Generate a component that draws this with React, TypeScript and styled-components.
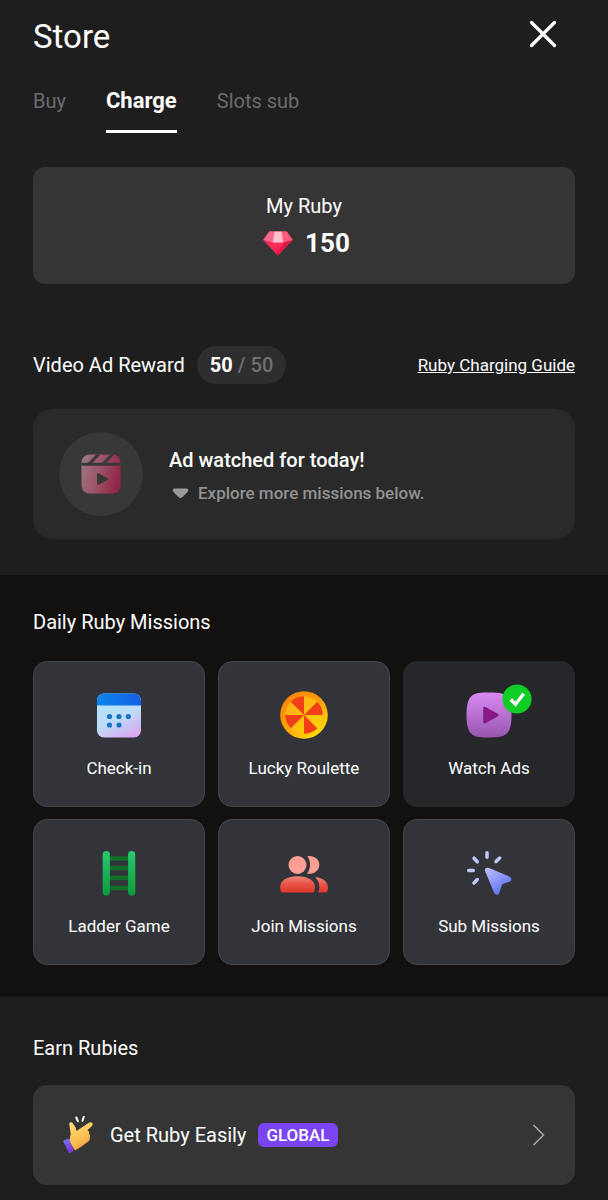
import React, { useState } from "react";
import styled, { createGlobalStyle } from "styled-components";

const GlobalStyle = createGlobalStyle`
  *, *::before, *::after { box-sizing: border-box; }
  body {
    margin: 0;
    background: #1e1e1e;
    color: #fff;
    font-family: Roboto, "Liberation Sans", sans-serif;
  }
  h1, h2, p { margin: 0; font-weight: 400; }
  button { font: inherit; color: inherit; background: none; border: 0; padding: 0; cursor: pointer; }
  svg { display: block; flex: none; }
`;

const Page = styled.main`
  min-height: 100vh;
  background: #1e1e1e;
`;

const Header = styled.header`
  display: flex;
  align-items: flex-start;
  justify-content: space-between;
  padding: 17px 48px 0 33px;
`;

const PageTitle = styled.h1`
  font-size: 33px;
  line-height: 40px;
`;

const CloseButton = styled.button`
  display: grid;
  place-items: center;
  width: 34px;
  height: 34px;
`;

const Tabs = styled.nav`
  display: flex;
  align-items: flex-start;
  gap: 40px;
  padding: 30px 33px 34px;
`;

const Tab = styled.button<{ $active: boolean }>`
  padding-bottom: 15px;
  border-bottom: 3px solid ${({ $active }) => ($active ? "#fff" : "transparent")};
  color: ${({ $active }) => ($active ? "#fff" : "#6b6b6e")};
  font-size: ${({ $active }) => ($active ? 22 : 20)}px;
  font-weight: ${({ $active }) => ($active ? 700 : 400)};
  line-height: 28px;
`;

const Section = styled.section<{ $dark?: boolean }>`
  background: ${({ $dark }) => ($dark ? "#12110f" : "transparent")};
  padding: ${({ $dark }) => ($dark ? "33px 33px 32px" : "0 33px 36px")};
`;

const EarnSection = styled(Section)`
  padding: 37px 33px 15px;
`;

const SectionTitle = styled.h2`
  font-size: 20px;
  line-height: 28px;
`;

const BalanceCard = styled.div`
  display: flex;
  flex-direction: column;
  align-items: center;
  gap: 8px;
  padding: 26px 24px 25px;
  border-radius: 12px;
  background: #353535;
`;

const BalanceLabel = styled.p`
  font-size: 20px;
  line-height: 26px;
`;

const BalanceValue = styled.div`
  display: flex;
  align-items: center;
  gap: 12px;
  padding-left: 5px;
  font-size: 26px;
  font-weight: 700;
  line-height: 32px;
`;

const RewardHeader = styled.div`
  display: flex;
  align-items: center;
  gap: 12px;
  padding: 62px 0 25px;
`;

const CountPill = styled.span`
  padding: 5px 13px;
  border-radius: 19px;
  background: #2e2e2e;
  color: #707070;
  font-size: 20px;
  font-weight: 500;
  line-height: 28px;
  strong { color: #fff; font-weight: 700; }
`;

const GuideLink = styled.a`
  margin-left: auto;
  color: #fff;
  font-size: 17px;
  line-height: 24px;
  text-decoration: underline;
`;

const RewardCard = styled.div`
  display: flex;
  align-items: center;
  gap: 26px;
  padding: 23px 26px;
  border-radius: 20px;
  background: #2a2a2a;
`;

const IconDisc = styled.div`
  display: grid;
  place-items: center;
  flex: none;
  width: 84px;
  height: 84px;
  border-radius: 50%;
  background: #383838;
`;

const RewardText = styled.div`
  display: flex;
  flex-direction: column;
  gap: 7px;
  padding-top: 3px;
`;

const RewardTitle = styled.p`
  font-size: 20px;
  font-weight: 500;
  line-height: 28px;
`;

const RewardHint = styled.p`
  display: flex;
  align-items: center;
  gap: 9px;
  padding-left: 3px;
  color: #929292;
  font-size: 17px;
  font-weight: 500;
  line-height: 24px;
`;

const MissionGrid = styled.div`
  display: grid;
  grid-template-columns: repeat(3, 1fr);
  gap: 12px 13px;
  margin-top: 25px;
`;

const MissionTile = styled.button<{ $done?: boolean }>`
  display: flex;
  flex-direction: column;
  align-items: center;
  gap: 17px;
  padding: 29px 8px 26px;
  border: 1px solid ${({ $done }) => ($done ? "#26272b" : "#45454c")};
  border-radius: 14px;
  background: ${({ $done }) => ($done ? "#26272b" : "#33343a")};
  font-size: 17px;
  line-height: 24px;
`;

const MissionIcon = styled.span`
  position: relative;
  display: block;
  width: 48px;
  height: 48px;
`;

const DoneBadge = styled.span`
  position: absolute;
  top: -7px;
  right: -19px;
`;

const OfferCard = styled.button`
  display: flex;
  align-items: center;
  width: 100%;
  margin-top: 23px;
  padding: 31px 30px;
  border-radius: 14px;
  background: #353535;
`;

const OfferTitle = styled.span`
  margin: 0 12px 0 16px;
  font-size: 20px;
  line-height: 28px;
`;

const OfferBadge = styled.span`
  margin-right: auto;
  padding: 0 8px;
  border-radius: 6px;
  background: #7a45f0;
  font-size: 17px;
  font-weight: 500;
  line-height: 24px;
`;

const CloseIcon = () => (
  <svg width="28" height="28" viewBox="0 0 28 28" fill="none" stroke="#fff" strokeWidth="3.2" strokeLinecap="round" aria-hidden>
    <path d="M2.5 2.5 25.5 25.5M25.5 2.5 2.5 25.5" />
  </svg>
);

const RubyIcon = () => (
  <svg width="30" height="25" viewBox="0 0 30 25" aria-hidden>
    <defs>
      <linearGradient id="rubyBody" x1="0" y1="0" x2="0.3" y2="1">
        <stop offset="0" stopColor="#ff5d7f" />
        <stop offset="1" stopColor="#f21345" />
      </linearGradient>
    </defs>
    <path d="M6.3.5h17.4L29.7 9 15 24.6.3 9Z" fill="url(#rubyBody)" />
    <path d="M6.3.5h5.2L9.6 11.5.3 9Z" fill="#fb6a88" />
    <path d="M18.5.5h5.2l6 8.5-9.3 2.5Z" fill="#ff5c7d" />
    <path d="M11.5.5h7l1.9 11H9.6Z" fill="#ffc2cb" />
    <path d="M.3 9 9.6 11.5 15 24.6Z" fill="#fa2b58" />
    <path d="M29.7 9 20.4 11.5 15 24.6Z" fill="#df1945" />
  </svg>
);

const ClapperIcon = () => (
  <svg width="40" height="40" viewBox="0 0 40 40" aria-hidden>
    <defs>
      <linearGradient id="clapper" x1="0" y1="0" x2="1" y2="0.25">
        <stop offset="0" stopColor="#9b7c82" />
        <stop offset="0.5" stopColor="#9c566a" />
        <stop offset="1" stopColor="#922847" />
      </linearGradient>
      <clipPath id="clapperClip">
        <rect x="0.5" y="0.5" width="39" height="39" rx="8" />
      </clipPath>
    </defs>
    <g clipPath="url(#clapperClip)">
      <rect width="40" height="40" fill="url(#clapper)" />
      <path d="M0 10.3h40" stroke="#383838" strokeWidth="3" />
      <path d="M8 10 18 0M22 10 32 0" stroke="#383838" strokeWidth="3" />
    </g>
    <path d="M17 20.2v9.6l9-4.8Z" fill="#383838" stroke="#383838" strokeWidth="2" strokeLinejoin="round" />
  </svg>
);

const DownIcon = () => (
  <svg width="17" height="11" viewBox="0 0 17 11" aria-hidden>
    <path d="M3 .5h11C16.2 .5 17 2.5 15.5 3.9L10.3 9.2C9.2 10.3 7.8 10.3 6.7 9.2L1.5 3.9C0 2.5 .8 .5 3 .5Z" fill="#9b9b9b" />
  </svg>
);

const CalendarIcon = () => (
  <svg width="48" height="48" viewBox="0 0 48 48" aria-hidden>
    <defs>
      <linearGradient id="calBody" x1="0.3" y1="0.2" x2="0.7" y2="1">
        <stop offset="0" stopColor="#b3e3fb" />
        <stop offset="0.5" stopColor="#bfdaf8" />
        <stop offset="1" stopColor="#d8aaf0" />
      </linearGradient>
      <linearGradient id="calTop" x1="0" y1="0" x2="1" y2="0">
        <stop offset="0" stopColor="#0a86ed" />
        <stop offset="1" stopColor="#165ee5" />
      </linearGradient>
    </defs>
    <rect x="2" y="2.5" width="44" height="44" rx="7" fill="url(#calBody)" />
    <path d="M2 14.5V9.5a7 7 0 0 1 7-7h30a7 7 0 0 1 7 7v5Z" fill="url(#calTop)" />
    <g fill="#1574c4">
      <circle cx="14.5" cy="25.5" r="2.6" />
      <circle cx="24" cy="25.5" r="2.6" />
      <circle cx="33.3" cy="25.5" r="2.6" />
      <circle cx="14.5" cy="34" r="2.6" />
      <circle cx="24" cy="34" r="2.6" />
    </g>
  </svg>
);

const RouletteIcon = () => (
  <svg width="48" height="48" viewBox="0 0 48 48" aria-hidden>
    <defs>
      <linearGradient id="wheelRim" x1="0.15" y1="0.1" x2="0.75" y2="0.9">
        <stop offset="0" stopColor="#ff8608" />
        <stop offset="0.5" stopColor="#ff9f08" />
        <stop offset="1" stopColor="#ffd60a" />
      </linearGradient>
      <linearGradient id="wheelFace" x1="0" y1="0" x2="1" y2="1">
        <stop offset="0" stopColor="#ffab15" />
        <stop offset="1" stopColor="#ffd40b" />
      </linearGradient>
    </defs>
    <circle cx="24" cy="24" r="23.8" fill="url(#wheelRim)" />
    <circle cx="24" cy="24" r="18.7" fill="url(#wheelFace)" />
    <g fill="#f03e16">
      <path d="M24 24V5.3A18.7 18.7 0 0 0 10.8 10.8Z" />
      <path d="M24 24H42.7A18.7 18.7 0 0 0 37.2 10.8Z" />
      <path d="M24 24V42.7A18.7 18.7 0 0 0 37.2 37.2Z" />
      <path d="M24 24H5.3A18.7 18.7 0 0 0 10.8 37.2Z" />
    </g>
  </svg>
);

const WatchIcon = () => (
  <svg width="48" height="48" viewBox="0 0 48 48" aria-hidden>
    <defs>
      <linearGradient id="watchBody" x1="0" y1="0" x2="0" y2="1">
        <stop offset="0" stopColor="#da89f4" />
        <stop offset="1" stopColor="#9657ad" />
      </linearGradient>
    </defs>
    <path d="M24 1.5C39 1.5 46.5 2 46.5 24S39 46.5 24 46.5 1.5 46 1.5 24 9 1.5 24 1.5Z" fill="url(#watchBody)" />
    <path d="M19.7 17.2v13.8l12.3-6.9Z" fill="#871b85" stroke="#871b85" strokeWidth="3" strokeLinejoin="round" />
  </svg>
);

const CheckIcon = () => (
  <svg width="30" height="30" viewBox="0 0 30 30" aria-hidden>
    <circle cx="15" cy="15" r="14.6" fill="#10ce25" />
    <path d="m8.8 15.5 4.7 4.7 8.2-10.4" fill="none" stroke="#fff" strokeWidth="3.4" />
  </svg>
);

const LadderIcon = () => (
  <svg width="48" height="48" viewBox="0 0 48 48" aria-hidden>
    <defs>
      <linearGradient id="ladderRail" x1="0" y1="0" x2="0" y2="1">
        <stop offset="0" stopColor="#2bca6f" />
        <stop offset="1" stopColor="#0b9b3e" />
      </linearGradient>
    </defs>
    <path d="M11 9.5h26M11 19h26M11 29h26M11 39h26" stroke="#12702a" strokeWidth="4.6" />
    <rect x="7.7" y="2" width="7.2" height="44.5" rx="3.6" fill="url(#ladderRail)" />
    <rect x="33.1" y="2" width="7.2" height="44.5" rx="3.6" fill="url(#ladderRail)" />
  </svg>
);

const PeopleIcon = () => (
  <svg width="48" height="48" viewBox="0 0 48 48" aria-hidden>
    <defs>
      <linearGradient id="peopleBody" x1="0" y1="0" x2="0" y2="1">
        <stop offset="0" stopColor="#f0857b" />
        <stop offset="0.5" stopColor="#e75245" />
        <stop offset="1" stopColor="#df3829" />
      </linearGradient>
    </defs>
    <circle cx="17.5" cy="16" r="9" fill="#ff9e95" />
    <path d="M27.5 7.2C34 6.3 39.3 10.3 39.3 16S33.5 25.7 27 24.7C30.8 19.8 31.2 12.8 27.5 7.2Z" fill="#ff9e95" />
    <path d="M17.5 27.2C28 27.2 35 31.3 35 38 35 41.9 34.2 43.5 31.5 43.5h-28C.8 43.5 .2 41.9 .2 38 .2 31.3 7 27.2 17.5 27.2Z" fill="url(#peopleBody)" />
    <path d="M35 28.2C43.5 28.8 48 32.5 48 39 48 42.2 47 43.5 44.5 43.5H38.2C40.4 38 39.3 32 35 28.2Z" fill="url(#peopleBody)" />
  </svg>
);

const CursorIcon = () => (
  <svg width="48" height="48" viewBox="0 0 48 48" aria-hidden>
    <defs>
      <linearGradient id="cursorBody" x1="0.1" y1="0" x2="0.7" y2="0.9">
        <stop offset="0" stopColor="#b5bdfb" />
        <stop offset="1" stopColor="#6375f2" />
      </linearGradient>
    </defs>
    <path d="M21.7 22.1C21 20.2 22.1 19.8 23.5 20.4L43.8 29C45.3 29.7 45.3 30.800 43.800 31.300L37.600 33.400C36.400 33.800 35.700 34.600 35.300 35.800L33 43.200C32.500 44.700 31.200 44.700 30.500 43.200Z" fill="url(#cursorBody)" stroke="url(#cursorBody)" strokeWidth="3" strokeLinejoin="round" />
    <g stroke="#bdc8fb" strokeWidth="3.5" strokeLinecap="round">
      <path d="M22 3.7v4.6M9 9.2l3.3 3.6M34.7 9 31 12.6M3.7 21.5h4.6M9 34l3.3-3.5" />
    </g>
  </svg>
);

const SnapIcon = () => (
  <svg width="31" height="38" viewBox="0 0 31 38" aria-hidden>
    <defs>
      <linearGradient id="hand" x1="0.3" y1="0" x2="0.7" y2="1">
        <stop offset="0" stopColor="#ffdd70" />
        <stop offset="0.6" stopColor="#fabd51" />
        <stop offset="1" stopColor="#f29435" />
      </linearGradient>
      <linearGradient id="cuff" x1="0.5" y1="0" x2="0.7" y2="1">
        <stop offset="0" stopColor="#7470f5" />
        <stop offset="1" stopColor="#7830c8" />
      </linearGradient>
    </defs>
    <path d="M6.3 8.200C6 6 8.400 5.400 9.700 7.200L12.600 11.600Q13 13.500 13.500 15L25.500 6.900C28.800 5 31.300 8.300 28.500 10.500L24.300 14.200C26 15 26.700 16.200 25.900 17.900 27.500 18.800 27.500 20.700 26.500 21.800 27.200 23.300 26.600 24.500 25.300 25.600L18.500 30.500 12 34.500 6.300 25.500 7.700 18Z" fill="url(#hand)" />
    <path d="M1 24.3 4.3 23.1C5.2 22.8 5.9 23.2 6.4 24L10.6 33.2C11 34.2 10.7 34.9 9.9 35.4L7.3 37Q6.2 37.5 5.6 36.4L.5 26Q0 24.8 1 24.3Z" fill="url(#cuff)" />
    <path d="m13.3 1.5 1.5 3.7M20.7 1 19.500 4.700" stroke="#fff" strokeWidth="2" strokeLinecap="round" />
  </svg>
);

const ChevronIcon = () => (
  <svg width="13" height="22" viewBox="0 0 13 22" fill="none" stroke="#a9a9a9" strokeWidth="1.5" aria-hidden>
    <path d="m1.5 1 10 10-10 10" />
  </svg>
);

const tabNames = ["Buy", "Charge", "Slots sub"];

const missions = [
  { label: "Check-in", Icon: CalendarIcon },
  { label: "Lucky Roulette", Icon: RouletteIcon },
  { label: "Watch Ads", Icon: WatchIcon, done: true },
  { label: "Ladder Game", Icon: LadderIcon },
  { label: "Join Missions", Icon: PeopleIcon },
  { label: "Sub Missions", Icon: CursorIcon },
];

export default function App() {
  const [tab, setTab] = useState("Charge");

  return (
    <>
      <GlobalStyle />
      <Page>
        <Header>
          <PageTitle>Store</PageTitle>
          <CloseButton aria-label="Close">
            <CloseIcon />
          </CloseButton>
        </Header>

        <Tabs>
          {tabNames.map((name) => (
            <Tab key={name} $active={name === tab} onClick={() => setTab(name)}>
              {name}
            </Tab>
          ))}
        </Tabs>

        <Section>
          <BalanceCard>
            <BalanceLabel>My Ruby</BalanceLabel>
            <BalanceValue>
              <RubyIcon />
              150
            </BalanceValue>
          </BalanceCard>

          <RewardHeader>
            <SectionTitle>Video Ad Reward</SectionTitle>
            <CountPill>
              <strong>50</strong> / 50
            </CountPill>
            <GuideLink href="#guide">Ruby Charging Guide</GuideLink>
          </RewardHeader>

          <RewardCard>
            <IconDisc>
              <ClapperIcon />
            </IconDisc>
            <RewardText>
              <RewardTitle>Ad watched for today!</RewardTitle>
              <RewardHint>
                <DownIcon />
                Explore more missions below.
              </RewardHint>
            </RewardText>
          </RewardCard>
        </Section>

        <Section $dark>
          <SectionTitle>Daily Ruby Missions</SectionTitle>
          <MissionGrid>
            {missions.map(({ label, Icon, done }) => (
              <MissionTile key={label} $done={done}>
                <MissionIcon>
                  <Icon />
                  {done && (
                    <DoneBadge>
                      <CheckIcon />
                    </DoneBadge>
                  )}
                </MissionIcon>
                {label}
              </MissionTile>
            ))}
          </MissionGrid>
        </Section>

        <EarnSection>
          <SectionTitle>Earn Rubies</SectionTitle>
          <OfferCard>
            <SnapIcon />
            <OfferTitle>Get Ruby Easily</OfferTitle>
            <OfferBadge>GLOBAL</OfferBadge>
            <ChevronIcon />
          </OfferCard>
        </EarnSection>
      </Page>
    </>
  );
}
